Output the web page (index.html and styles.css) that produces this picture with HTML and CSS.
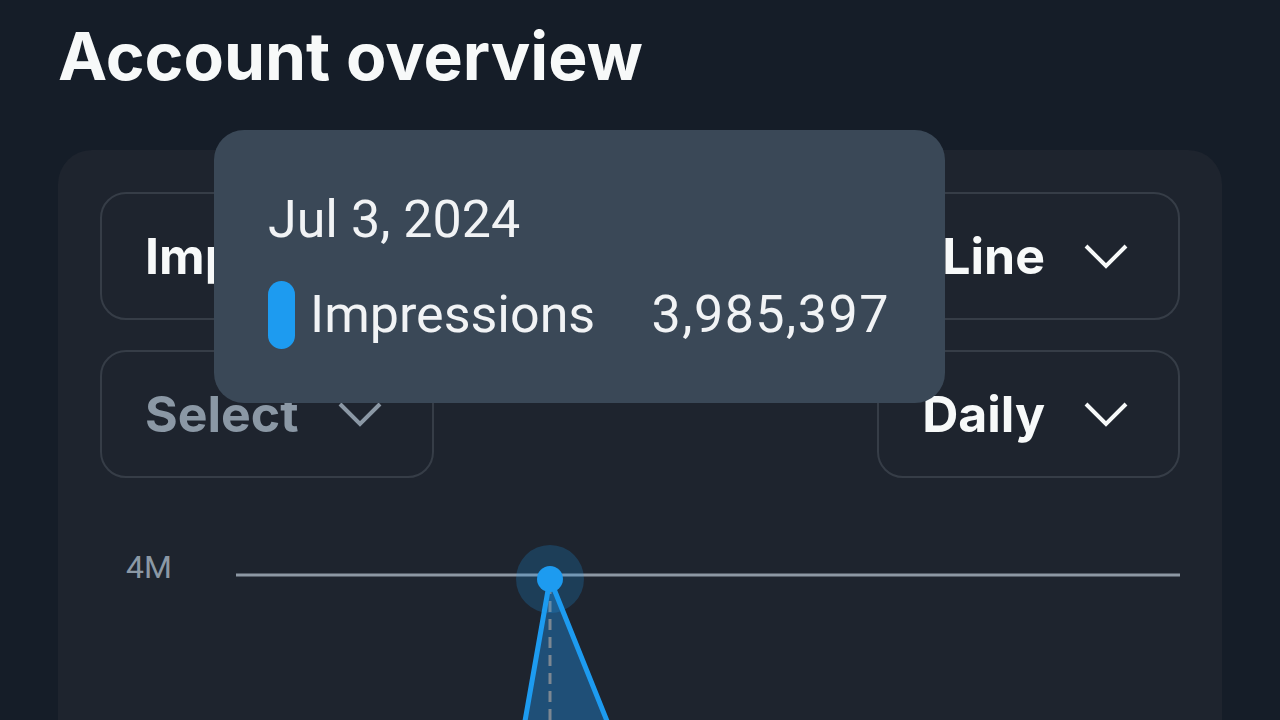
FILE: index.html
```html
<!DOCTYPE html>
<html lang="en">

<head>
    <meta charset="UTF-8">
    <meta name="viewport" content="width=device-width, initial-scale=1.0">
    <title>Account overview</title>
    <link rel="stylesheet" href="styles.css">
</head>

<body>
    <div class="page">
        <h1 class="page-title">Account overview</h1>

        <div class="card">
            <div class="controls">
                <div class="control-row">
                    <button class="dropdown">
                        <span>Impressions</span>
                        <svg class="chevron" width="44" height="26" viewBox="0 0 44 26" fill="none" stroke="currentColor" stroke-width="4">
                            <path d="M2 3 L22 23 L42 3" />
                        </svg>
                    </button>
                    <button class="dropdown">
                        <span>Line</span>
                        <svg class="chevron" width="44" height="26" viewBox="0 0 44 26" fill="none" stroke="currentColor" stroke-width="4">
                            <path d="M2 3 L22 23 L42 3" />
                        </svg>
                    </button>
                </div>
                <div class="control-row">
                    <button class="dropdown placeholder">
                        <span>Select</span>
                        <svg class="chevron" width="44" height="26" viewBox="0 0 44 26" fill="none" stroke="currentColor" stroke-width="4">
                            <path d="M2 3 L22 23 L42 3" />
                        </svg>
                    </button>
                    <button class="dropdown">
                        <span>Daily</span>
                        <svg class="chevron" width="44" height="26" viewBox="0 0 44 26" fill="none" stroke="currentColor" stroke-width="4">
                            <path d="M2 3 L22 23 L42 3" />
                        </svg>
                    </button>
                </div>
            </div>

            <div class="chart">
                <svg width="1080" height="200" viewBox="0 0 1080 200">
                    <text class="axis-label" x="26" y="57">4M</text>
                    <line x1="136" y1="54" x2="1081" y2="54" stroke="#8d98a4" stroke-width="3" />
                    <polygon points="450,58 425,200 507,200" fill="#1f5a8a" opacity="0.8" />
                    <line x1="450" y1="62" x2="450" y2="200" stroke="#7c8792" stroke-width="3" stroke-dasharray="11 7" />
                    <polyline points="425,200 450,58 507,200" fill="none" stroke="#1d9bf0" stroke-width="5" stroke-linejoin="round" />
                    <circle cx="450" cy="58" r="34" fill="#1d9bf0" opacity="0.22" />
                    <circle cx="450" cy="58" r="13" fill="#1d9bf0" />
                </svg>
            </div>
        </div>
    </div>

    <div class="tooltip">
        <div class="tooltip-date">Jul 3, 2024</div>
        <div class="tooltip-row">
            <span class="tooltip-swatch"></span>
            <span class="tooltip-name">Impressions</span>
            <span class="tooltip-value">3,985,397</span>
        </div>
    </div>
</body>

</html>
```

FILE: styles.css
```css
* {
    margin: 0;
    padding: 0;
    box-sizing: border-box;
}

body {
    font-family: Inter, "Noto Sans", sans-serif;
    height: 100vh;
    overflow: hidden;
    background: #151d28;
    color: #f7f9f9;
}

.page {
    padding: 16px 58px 0;
}

.page-title {
    font-size: 66px;
    font-weight: 700;
    line-height: 80px;
}

.card {
    margin-top: 54px;
    background: #1e242e;
    border-radius: 34px 34px 0 0;
    padding: 42px 42px 0;
    height: 570px;
    overflow: hidden;
}

.controls {
    display: flex;
    flex-direction: column;
    gap: 30px;
}

.control-row {
    display: flex;
    justify-content: space-between;
}

.dropdown {
    display: flex;
    align-items: center;
    gap: 39px;
    height: 128px;
    padding: 0 50px 0 43px;
    background: none;
    border: 2px solid #363d47;
    border-radius: 26px;
    font-family: inherit;
    font-size: 50px;
    font-weight: 700;
    color: #f7f9f9;
}

.dropdown .chevron {
    color: #f7f9f9;
}

.dropdown.placeholder,
.dropdown.placeholder .chevron {
    color: #8b98a5;
}

.chart {
    margin-top: 43px;
}

.chart svg {
    display: block;
}

.axis-label {
    font-family: Roboto, sans-serif;
    font-size: 32px;
    fill: #8b98a5;
}

.tooltip {
    position: absolute;
    left: 214px;
    top: 130px;
    width: 731px;
    height: 273px;
    padding: 60px 55px 0 54px;
    background: #3a4857;
    border-radius: 30px;
    font-family: Roboto, sans-serif;
    color: #f1f3f5;
}

.tooltip-date {
    font-size: 52px;
    line-height: 60px;
}

.tooltip-row {
    display: flex;
    align-items: center;
    margin-top: 31px;
    font-size: 52px;
    line-height: 68px;
}

.tooltip-swatch {
    width: 27px;
    height: 68px;
    border-radius: 14px;
    background: #1d9bf0;
    margin-right: 15px;
}

.tooltip-value {
    margin-left: auto;
    letter-spacing: 1.5px;
}
```
